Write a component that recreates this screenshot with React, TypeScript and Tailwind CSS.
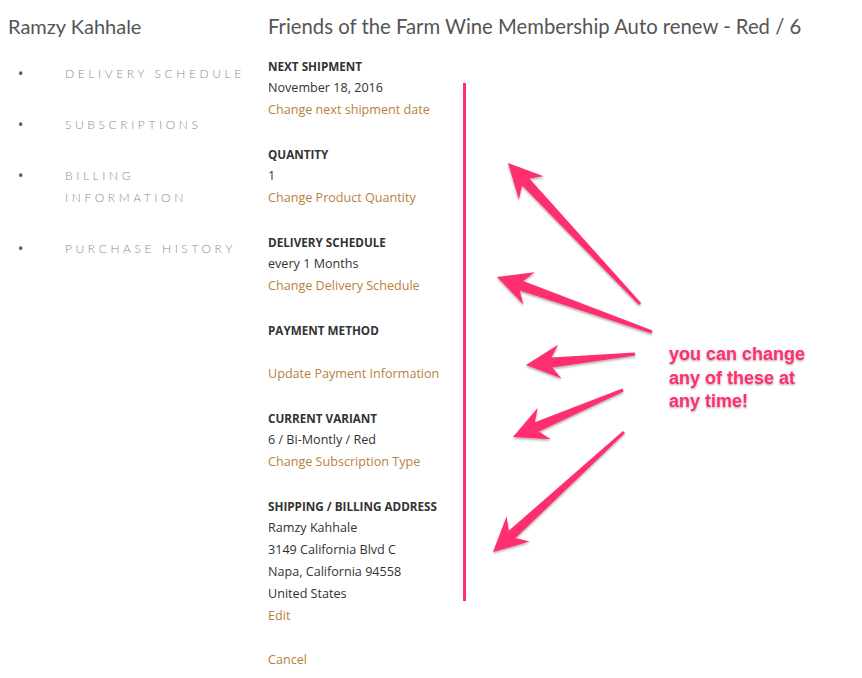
import React from "react";

type Pt = [number, number];

function arrowPoints(tail: Pt, tip: Pt, headLen = 34, headHalf = 17, notch = 26, neck = 5, tailHalf = 1.5): string {
  const dx = tail[0] - tip[0];
  const dy = tail[1] - tip[1];
  const L = Math.hypot(dx, dy);
  const ux = dx / L;
  const uy = dy / L;
  const px = -uy;
  const py = ux;
  const p = (a: number, b: number) => `${(tip[0] + ux * a + px * b).toFixed(1)},${(tip[1] + uy * a + py * b).toFixed(1)}`;
  return [p(0, 0), p(headLen, -headHalf), p(notch, -neck), p(L, -tailHalf), p(L, tailHalf), p(notch, neck), p(headLen, headHalf)].join(" ");
}

const arrows: { tail: Pt; tip: Pt }[] = [
  { tail: [640, 304], tip: [508, 163] },
  { tail: [652, 332], tip: [497, 277] },
  { tail: [635, 354], tip: [526, 365] },
  { tail: [623, 390], tip: [513, 437] },
  { tail: [624, 432], tip: [493, 552] },
];

function Label({ children }: { children: React.ReactNode }) {
  return <div className="text-[11.7px] font-bold uppercase text-[#333] leading-[20px] mb-[1px]">{children}</div>;
}
function Val({ children }: { children?: React.ReactNode }) {
  return <div className="text-[12.6px] text-[#333] leading-[22px] h-[22px]">{children}</div>;
}
function Lnk({ children }: { children: React.ReactNode }) {
  return <div className="text-[12.6px] text-[#b88140] leading-[22px]">{children}</div>;
}

export default function App() {
  const nav: React.ReactNode[] = [
    "DELIVERY SCHEDULE",
    "SUBSCRIPTIONS",
    <>
      BILLING
      <br />
      INFORMATION
    </>,
    "PURCHASE HISTORY",
  ];
  return (
    <div className="relative w-[862px] h-[678px] bg-white overflow-hidden">
      <div className="flex pt-[12px]">
        <div className="w-[260px] pl-[8px]">
          <div className="font-['Lato',sans-serif] text-[20px] leading-[28px] text-[#555]">Ramzy Kahhale</div>
          <ul className="mt-[23px] flex flex-col gap-[29px]">
            {nav.map((n, i) => (
              <li key={i} className="flex">
                <span className="w-[13px] ml-[10px] text-[#555] text-[14px] leading-[22px]">•</span>
                <span className="ml-[34px] font-['Lato',sans-serif] font-light text-[12px] tracking-[0.3em] leading-[22px] text-[#8c8c8c]">
                  {n}
                </span>
              </li>
            ))}
          </ul>
        </div>
        <div className="flex-1 pl-[8px] font-['Open_Sans',sans-serif]">
          <div className="font-['Lato',sans-serif] text-[20.3px] leading-[28px] text-[#555]">
            Friends of the Farm Wine Membership Auto renew - Red / 6
          </div>
          <div className="mt-[16px] flex flex-col gap-[23px]">
            <div>
              <Label>Next Shipment</Label>
              <Val>November 18, 2016</Val>
              <Lnk>Change next shipment date</Lnk>
            </div>
            <div>
              <Label>Quantity</Label>
              <Val>1</Val>
              <Lnk>Change Product Quantity</Lnk>
            </div>
            <div>
              <Label>Delivery Schedule</Label>
              <Val>every 1 Months</Val>
              <Lnk>Change Delivery Schedule</Lnk>
            </div>
            <div>
              <Label>Payment Method</Label>
              <Val />
              <Lnk>Update Payment Information</Lnk>
            </div>
            <div>
              <Label>Current Variant</Label>
              <Val>6 / Bi-Montly / Red</Val>
              <Lnk>Change Subscription Type</Lnk>
            </div>
            <div>
              <Label>Shipping / Billing Address</Label>
              <Val>Ramzy Kahhale</Val>
              <Val>3149 California Blvd C</Val>
              <Val>Napa, California 94558</Val>
              <Val>United States</Val>
              <Lnk>Edit</Lnk>
            </div>
          </div>
          <div className="mt-[22px]">
            <Lnk>Cancel</Lnk>
          </div>
        </div>
      </div>

      <svg className="absolute left-0 top-0 pointer-events-none" width="862" height="678">
        <defs>
          <filter id="sh" x="-20%" y="-20%" width="140%" height="140%">
            <feDropShadow dx="0" dy="1.5" stdDeviation="1.2" floodColor="#000" floodOpacity="0.35" />
          </filter>
        </defs>
        <rect x="463" y="83" width="3" height="518" fill="#ff2f6e" />
        <g filter="url(#sh)">
          {arrows.map((a, i) => (
            <polygon key={i} points={arrowPoints(a.tail, a.tip)} fill="#ff2f6e" />
          ))}
        </g>
      </svg>

      <div className="absolute left-[669px] top-[343px] font-['Liberation_Sans',Arial,sans-serif] font-bold text-[18px] leading-[23.5px] text-[#ff2f6e] [text-shadow:0_0_2px_#fff,0_1px_2px_rgba(0,0,0,0.45)]">
        you can change
        <br />
        any of these at
        <br />
        any time!
      </div>
    </div>
  );
}
